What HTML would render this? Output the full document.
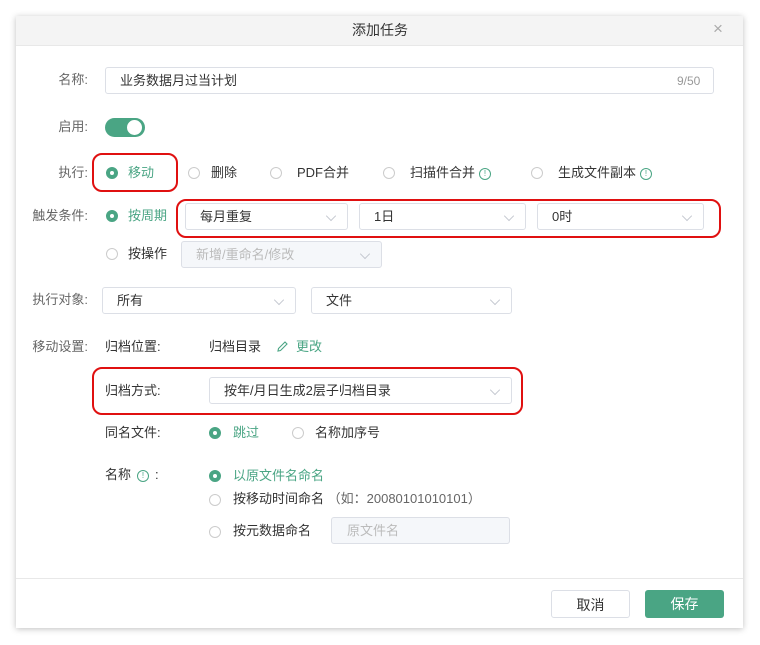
<!DOCTYPE html>
<html><head><meta charset="utf-8"><style>
body{margin:0;width:760px;height:645px;background:#fff;font-family:"Liberation Sans","Noto Sans CJK SC",sans-serif;font-size:13px;color:#333;position:relative;overflow:hidden}
.a{position:absolute;white-space:nowrap}
.dlg{position:absolute;left:16px;top:16px;width:727px;height:612px;background:#fff;box-shadow:0 1px 6px rgba(0,0,0,.25)}
.hd{position:absolute;left:16px;top:16px;width:727px;height:29px;background:#f4f4f4;border-bottom:1px solid #e8e8e8}
.lb{position:absolute;color:#666;text-align:right;width:88px;left:0;line-height:16px}
.t{position:absolute;line-height:16px;white-space:nowrap}
.box{position:absolute;border:1px solid #dcdfe6;border-radius:3px;background:#fff;box-sizing:border-box}
.sel .v{position:absolute;left:14px;top:5px;line-height:16px}
.ch{position:absolute;right:12px;top:8px;width:7px;height:7px;border-right:1px solid #c0c4cc;border-bottom:1px solid #c0c4cc;transform:rotate(45deg) scale(.9,.9)}
.r{position:absolute;width:12px;height:12px;border:1px solid #ccc;border-radius:50%;box-sizing:border-box;background:#fff}
.r.on{border:4px solid #4aa584;background:#fff}
.g{color:#4aa584}
.red{position:absolute;border:2.5px solid #e01010;border-radius:10px;box-sizing:border-box}
.info{display:inline-block;width:10px;height:10px;border:1px solid #4aa584;border-radius:50%;font-size:8px;line-height:10px;text-align:center;color:#4aa584;vertical-align:1px;margin-left:4px}
.btn{position:absolute;top:590px;width:79px;height:28px;border-radius:3px;box-sizing:border-box;text-align:center;line-height:28px;font-size:14px}
</style></head><body>
<div class="dlg"></div>
<div class="hd"></div>
<div class="t" style="left:352px;top:22px;font-size:14px">添加任务</div>
<div class="t" style="left:713px;top:21px;font-size:17px;color:#aaa">×</div>

<div class="lb" style="top:72px">名称:</div>
<div class="box" style="left:105px;top:67px;width:609px;height:27px"></div>
<div class="t" style="left:120px;top:73px">业务数据月过当计划</div>
<div class="t" style="left:677px;top:73px;color:#999;font-size:12px">9/50</div>

<div class="lb" style="top:119px">启用:</div>
<div class="a" style="left:105px;top:118px;width:40px;height:19px;border-radius:10px;background:#4aa584"></div>
<div class="a" style="left:127px;top:120px;width:15px;height:15px;border-radius:50%;background:#fff"></div>

<div class="lb" style="top:165px">执行:</div>
<div class="r on" style="left:106px;top:167px"></div><div class="t g" style="left:128px;top:165px">移动</div>
<div class="r" style="left:188px;top:167px"></div><div class="t" style="left:211px;top:165px">删除</div>
<div class="r" style="left:270px;top:167px"></div><div class="t" style="left:297px;top:165px">PDF合并</div>
<div class="r" style="left:383px;top:167px"></div><div class="t" style="left:410px;top:165px">扫描件合并<span class="info">!</span></div>
<div class="r" style="left:531px;top:167px"></div><div class="t" style="left:558px;top:165px">生成文件副本<span class="info">!</span></div>
<div class="red" style="left:92px;top:153px;width:86px;height:39px"></div>

<div class="lb" style="top:208px">触发条件:</div>
<div class="r on" style="left:106px;top:210px"></div><div class="t g" style="left:128px;top:208px">按周期</div>
<div class="box sel" style="left:185px;top:203px;width:163px;height:27px"><span class="v">每月重复</span><i class="ch"></i></div>
<div class="box sel" style="left:359px;top:203px;width:167px;height:27px"><span class="v">1日</span><i class="ch"></i></div>
<div class="box sel" style="left:537px;top:203px;width:167px;height:27px"><span class="v">0时</span><i class="ch"></i></div>
<div class="red" style="left:176px;top:199px;width:545px;height:39px"></div>

<div class="r" style="left:106px;top:248px"></div><div class="t" style="left:128px;top:246px">按操作</div>
<div class="box sel" style="left:181px;top:241px;width:201px;height:27px;background:#f5f7fa;color:#bbb"><span class="v">新增/重命名/修改</span><i class="ch"></i></div>

<div class="lb" style="top:292px">执行对象:</div>
<div class="box sel" style="left:102px;top:287px;width:194px;height:27px"><span class="v">所有</span><i class="ch"></i></div>
<div class="box sel" style="left:311px;top:287px;width:201px;height:27px"><span class="v">文件</span><i class="ch"></i></div>

<div class="lb" style="top:339px">移动设置:</div>
<div class="t" style="left:105px;top:339px">归档位置:</div>
<div class="t" style="left:209px;top:339px">归档目录</div>
<svg class="a" style="left:276px;top:340px" width="13" height="13" viewBox="0 0 13 13"><path d="M2 11 L2.5 8.5 L9 2 L11 4 L4.5 10.5 Z" fill="none" stroke="#4aa584" stroke-width="1.1"/></svg>
<div class="t g" style="left:296px;top:339px">更改</div>

<div class="t" style="left:105px;top:383px">归档方式:</div>
<div class="box sel" style="left:209px;top:377px;width:303px;height:27px"><span class="v">按年/月日生成2层子归档目录</span><i class="ch"></i></div>
<div class="red" style="left:92px;top:367px;width:431px;height:48px"></div>

<div class="t" style="left:105px;top:425px">同名文件:</div>
<div class="r on" style="left:209px;top:427px"></div><div class="t g" style="left:233px;top:425px">跳过</div>
<div class="r" style="left:292px;top:427px"></div><div class="t" style="left:315px;top:425px">名称加序号</div>

<div class="t" style="left:105px;top:467px">名称<span class="info" style="margin:0 6px 0 6px">!</span>:</div>
<div class="r on" style="left:209px;top:470px"></div><div class="t g" style="left:233px;top:468px">以原文件名命名</div>
<div class="r" style="left:209px;top:494px"></div><div class="t" style="left:233px;top:491px">按移动时间命名 <span style="color:#666">（如：20080101010101）</span></div>
<div class="r" style="left:209px;top:526px"></div><div class="t" style="left:233px;top:523px">按元数据命名</div>
<div class="box" style="left:331px;top:517px;width:179px;height:27px;background:#f5f7fa"></div>
<div class="t" style="left:347px;top:523px;color:#bbb">原文件名</div>

<div class="a" style="left:16px;top:578px;width:727px;height:1px;background:#e8e8e8"></div>
<div class="btn" style="left:551px;border:1px solid #dcdfe6;background:#fff;color:#333">取消</div>
<div class="btn" style="left:645px;background:#4aa584;color:#fff">保存</div>
</body></html>
